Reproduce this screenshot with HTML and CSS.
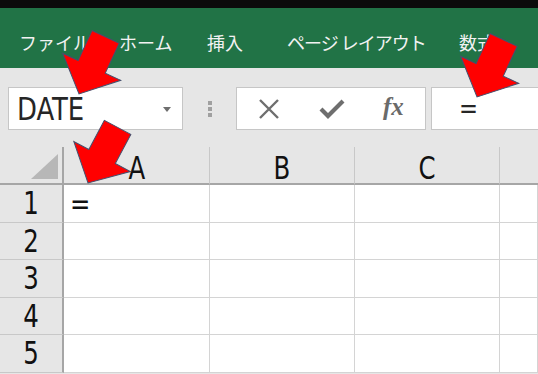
FILE: index.html
```html
<!DOCTYPE html>
<html lang="ja">
<head>
  <meta charset="UTF-8">
  <title>Excel - DATE</title>
  <link rel="stylesheet" href="styles.css">
</head>
<body>
  <div id="app">
    <div class="topbar"></div>

    <div class="ribbon">
      <span class="tab">ファイル</span>
      <span class="tab">ホーム</span>
      <span class="tab">挿入</span>
      <span class="tab tight">ページ レイアウト</span>
      <span class="tab">数式</span>
    </div>

    <div class="formula-bar">
      <div class="namebox">
        <span class="cond">DATE</span>
        <span class="caret"></span>
      </div>
      <div class="grip"><i></i><i></i><i></i></div>
      <div class="buttons">
        <svg class="btn" width="24" height="24" viewBox="0 0 24 24">
          <path d="M3 3 L21 21 M21 3 L3 21" stroke="#6e6e6e" stroke-width="2.4" fill="none"/>
        </svg>
        <svg class="btn" width="26" height="24" viewBox="0 0 26 24">
          <path d="M2 12 L9 19 L24 4" stroke="#6e6e6e" stroke-width="4.2" fill="none"/>
        </svg>
        <span class="fx">fx</span>
      </div>
      <div class="input"><span class="cond">=</span></div>
    </div>

    <div class="sheet">
      <div class="hd corner"><span class="tri"></span></div>
      <div class="hd col"><span class="cond">A</span></div>
      <div class="hd col"><span class="cond">B</span></div>
      <div class="hd col"><span class="cond">C</span></div>
      <div class="hd col last"></div>

      <div class="hd row"><span class="cond">1</span></div>
      <div class="cell"><span class="cond">=</span></div>
      <div class="cell"></div>
      <div class="cell"></div>
      <div class="cell"></div>

      <div class="hd row"><span class="cond">2</span></div>
      <div class="cell"></div><div class="cell"></div><div class="cell"></div><div class="cell"></div>

      <div class="hd row"><span class="cond">3</span></div>
      <div class="cell"></div><div class="cell"></div><div class="cell"></div><div class="cell"></div>

      <div class="hd row"><span class="cond">4</span></div>
      <div class="cell"></div><div class="cell"></div><div class="cell"></div><div class="cell"></div>

      <div class="hd row"><span class="cond">5</span></div>
      <div class="cell"></div><div class="cell"></div><div class="cell"></div><div class="cell"></div>
    </div>

    <!-- callout arrows drawn over the screen -->
    <svg class="arrows" width="538" height="374" viewBox="0 0 538 374">
      <g fill="#ff0000" stroke="#45506e" stroke-width="1">
        <polygon transform="translate(79 94) rotate(25)" points="-15,-63 15,-63 15,-30 32,-30 0,0 -32,-30 -15,-30"/>
        <polygon transform="translate(477 97) rotate(25)" points="-15,-63 15,-63 15,-30 32,-30 0,0 -32,-30 -15,-30"/>
        <polygon transform="translate(88 183) rotate(28)" points="-15,-63 15,-63 15,-30 32,-30 0,0 -32,-30 -15,-30"/>
      </g>
    </svg>
  </div>
</body>
</html>
```

FILE: styles.css
```css
body {
  margin: 0;
  font-family: "Noto Sans CJK JP", "Noto Sans", sans-serif;
  background: #e6e6e6;
  overflow: hidden;
}

#app {
  position: relative;
  width: 538px;
  height: 374px;
  overflow: hidden;
}

.topbar {
  height: 8px;
  background: #0b0b0b;
}

.ribbon {
  height: 60px;
  background: #217346;
  display: grid;
  grid-template-columns: 100px 88px 80px 172px auto;
  align-items: center;
  padding-left: 19px;
  box-sizing: border-box;
}

.tab {
  color: #f2f2f2;
  font-size: 18px;
  white-space: nowrap;
  margin-top: 8px;
}

.tab.tight {
  letter-spacing: -1px;
}

.cond {
  font-family: "DejaVu Sans Condensed", "DejaVu Sans", sans-serif;
  font-stretch: condensed;
  display: inline-block;
  transform: scaleX(0.9);
  transform-origin: left center;
}

.formula-bar {
  height: 79px;
  display: flex;
  align-items: flex-start;
  padding: 19px 0 0 8px;
  box-sizing: border-box;
}

.namebox {
  width: 175px;
  height: 43px;
  background: #fff;
  border: 1px solid #c6c6c6;
  box-sizing: border-box;
  display: flex;
  align-items: center;
  padding-left: 8px;
  position: relative;
}

.namebox .cond {
  font-size: 32px;
  color: #262626;
}

.caret {
  position: absolute;
  right: 11px;
  top: 19px;
  border-left: 4px solid transparent;
  border-right: 4px solid transparent;
  border-top: 5px solid #6e6e6e;
}

.grip {
  width: 53px;
  height: 43px;
  display: flex;
  flex-direction: column;
  align-items: center;
  justify-content: center;
  gap: 2px;
  padding-left: 1px;
  box-sizing: border-box;
}

.grip i {
  width: 4px;
  height: 4px;
  background: #a0a0a0;
}

.buttons {
  width: 190px;
  height: 43px;
  background: #fff;
  border: 1px solid #c6c6c6;
  box-sizing: border-box;
  display: flex;
  align-items: center;
  padding-left: 20px;
  gap: 38px;
}

.fx {
  font-family: "Liberation Serif", serif;
  font-style: italic;
  font-weight: bold;
  font-size: 25px;
  color: #6a6a6a;
  margin-top: -4px;
}

.input {
  flex: 1;
  height: 43px;
  margin-left: 5px;
  background: #fff;
  border: 1px solid #c6c6c6;
  border-right: none;
  box-sizing: border-box;
  display: flex;
  align-items: center;
  padding-left: 27px;
}

.input .cond {
  font-size: 28px;
  color: #262626;
}

.sheet {
  display: grid;
  grid-template-columns: 64px 146px 145px 145px 38px;
  grid-template-rows: 38px repeat(5, 37.5px);
  background: #fff;
}

.hd {
  background: #e6e6e6;
  display: flex;
  align-items: center;
  justify-content: center;
  box-sizing: border-box;
  color: #111;
}

.hd .cond {
  font-size: 32px;
  transform: scaleX(0.85);
  transform-origin: center center;
}

.col {
  border-right: 1px solid #c8c8c8;
  border-bottom: 2px solid #a6a6a6;
  padding-top: 6px;
}

.col.last {
  border-right: none;
}

.corner {
  border-right: 2px solid #a6a6a6;
  border-bottom: 2px solid #a6a6a6;
  position: relative;
}

.tri {
  position: absolute;
  right: 4px;
  bottom: 4px;
  width: 0;
  height: 0;
  border-left: 27px solid transparent;
  border-bottom: 25px solid #b7b7b7;
}

.row {
  border-right: 2px solid #a6a6a6;
  border-bottom: 1px solid #c8c8c8;
}

.cell {
  border-right: 1px solid #d4d4d4;
  border-bottom: 1px solid #d4d4d4;
  box-sizing: border-box;
  display: flex;
  align-items: center;
  padding-left: 6px;
}

.cell .cond {
  font-size: 30px;
  color: #111;
}

.arrows {
  position: absolute;
  top: 0;
  left: 0;
  pointer-events: none;
}
```
